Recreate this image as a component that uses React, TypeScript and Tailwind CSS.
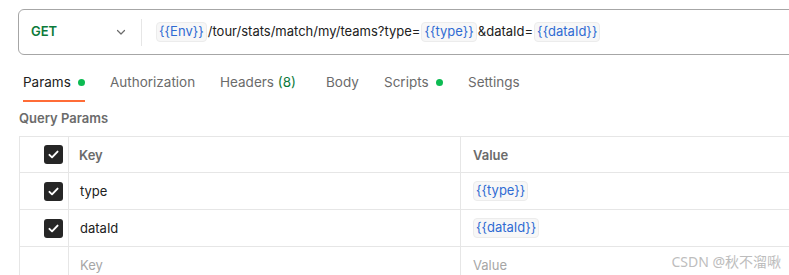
import React from "react";

const Chip = ({ children }: { children: React.ReactNode }) => (
  <span className="inline-flex items-center h-[20px] px-[2px] rounded-[4px] bg-[#f7f7f7] border border-[#ececec] text-[#2f6bd3]">
    {children}
  </span>
);

const Check = () => (
  <div className="w-[19px] h-[19px] rounded-[3px] bg-[#262626] flex items-center justify-center">
    <svg width="13" height="13" viewBox="0 0 16 16" fill="none">
      <path d="M3 8.5l3.2 3L13 4.5" stroke="#fff" strokeWidth="2.4" strokeLinecap="round" strokeLinejoin="round" />
    </svg>
  </div>
);

const Dot = () => <span className="inline-block w-[7px] h-[7px] rounded-full bg-[#0cbb52] ml-[7px]" />;

export default function App() {
  const rows = [
    { k: "type", v: "{{type}}" },
    { k: "dataId", v: "{{dataId}}" },
  ];
  return (
    <div className="relative w-[789px] h-[275px] overflow-hidden bg-white text-[13px] text-[#212121]" style={{ fontFamily: "Inter, 'Noto Sans', sans-serif" }}>
      {/* URL bar */}
      <div className="pt-[9px] pl-[18px]">
        <div className="flex items-center h-[46px] w-[800px] border border-[#a6a6a6] rounded-l-[6px]">
          <div className="flex items-center w-[122px] pl-[12px]">
            <span className="font-semibold text-[#0b7a3a] text-[13px]">GET</span>
            <svg className="ml-auto mr-[14px]" width="12" height="12" viewBox="0 0 12 12" fill="none">
              <path d="M2.5 4.5L6 8l3.5-3.5" stroke="#6b6b6b" strokeWidth="1.2" strokeLinecap="round" strokeLinejoin="round" />
            </svg>
          </div>
          <div className="w-px h-[27px] bg-[#e6e6e6]" />
          <div className="flex items-center pl-[14px] gap-[1px] whitespace-nowrap">
            <Chip>{"{{Env}}"}</Chip>
            <span>/tour/stats/match/my/teams?type=</span>
            <Chip>{"{{type}}"}</Chip>
            <span>&amp;dataId=</span>
            <Chip>{"{{dataId}}"}</Chip>
          </div>
        </div>
      </div>

      {/* Tabs */}
      <div className="flex items-stretch pl-[23px] h-[47px] text-[#6b6b6b] text-[13.5px]">
        <div className="w-[87px] flex">
          <div className="flex flex-col">
            <div className="flex items-center h-[45px] pt-[10px] text-[#212121]">
              Params
              <Dot />
            </div>
            <div className="h-[2px] bg-[#ff6c37]" />
          </div>
        </div>
        <div className="w-[110px] flex items-center h-[45px] pt-[10px]">Authorization</div>
        <div className="w-[106px] flex items-center h-[45px] pt-[10px]">
          Headers&nbsp;<span className="text-[#0b7a3a]">(8)</span>
        </div>
        <div className="w-[58px] flex items-center h-[45px] pt-[10px]">Body</div>
        <div className="w-[84px] flex items-center h-[45px] pt-[10px]">
          Scripts
          <Dot />
        </div>
        <div className="flex items-center h-[45px] pt-[10px]">Settings</div>
      </div>

      {/* Query Params */}
      <div className="pl-[19px] h-[34px] flex items-center font-semibold text-[#6b6b6b] text-[13px]">Query Params</div>

      {/* Table */}
      <div className="ml-[19px] w-[900px] border-t border-l border-[#e6e6e6]">
        <div className="flex h-[36px] border-b border-[#e6e6e6]">
          <div className="w-[49px] border-r border-[#e6e6e6] flex items-center justify-end pr-[5px]">
            <Check />
          </div>
          <div className="w-[392px] border-r border-[#e6e6e6] flex items-center pl-[10px] pt-[2px] font-semibold text-[#6b6b6b]">Key</div>
          <div className="flex-1 flex items-center pl-[12px] pt-[2px] font-semibold text-[#6b6b6b]">Value</div>
        </div>
        {rows.map((r) => (
          <div key={r.k} className="flex h-[37px] border-b border-[#e6e6e6]">
            <div className="w-[49px] border-r border-[#e6e6e6] flex items-center justify-end pr-[5px]">
              <Check />
            </div>
            <div className="w-[392px] border-r border-[#e6e6e6] flex items-center pl-[11px] pt-[2px]">{r.k}</div>
            <div className="flex-1 flex items-center pl-[12px]">
              <Chip>{r.v}</Chip>
            </div>
          </div>
        ))}
        <div className="flex h-[37px]">
          <div className="w-[49px] border-r border-[#e6e6e6]" />
          <div className="w-[392px] border-r border-[#e6e6e6] flex items-center pl-[11px] text-[#a6a6a6]">Key</div>
          <div className="flex-1 flex items-center pl-[12px] text-[#a6a6a6]">Value</div>
        </div>
      </div>

      {/* Watermark */}
      <div className="absolute right-[8px] bottom-[3px] text-[14px] text-[#bdbdbd]" style={{ fontFamily: "'Noto Sans', 'Noto Sans CJK SC', sans-serif" }}>
        CSDN @秋不溜啾
      </div>
    </div>
  );
}
